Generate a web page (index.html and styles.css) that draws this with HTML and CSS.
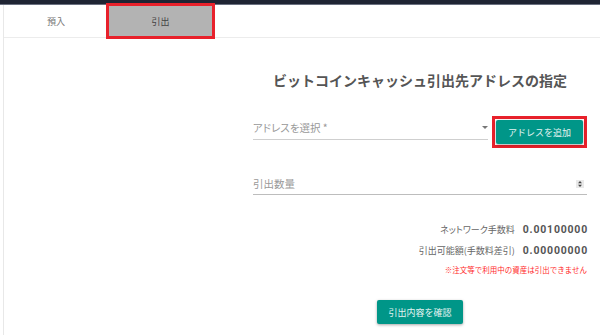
FILE: index.html
```html
<!DOCTYPE html>
<html lang="ja">
<head>
<meta charset="utf-8">
<title>引出</title>
<link rel="stylesheet" href="styles.css">
</head>
<body>
<div class="topbar"></div>
<div class="card">
  <div class="tabs">
    <div class="tab">預入</div>
    <div class="tab active">引出</div>
  </div>
  <div class="content">
    <h1 class="title">ビットコインキャッシュ引出先アドレスの指定</h1>
    <div class="select-row">
      <div class="field select">
        <span class="label palt">アドレスを選択 *</span>
        <span class="arrow"></span>
      </div>
      <div class="add-frame">
        <button class="btn add">アドレスを追加</button>
      </div>
    </div>
    <div class="field qty">
      <span class="label">引出数量</span>
      <svg class="spin" width="8" height="8" viewBox="0 0 8 8"><rect x="0" y="0" width="8" height="8" fill="#e9e9e9"/><path d="M4 1 L6 3.2 L2 3.2 Z M4 7 L6 4.8 L2 4.8 Z" fill="#444"/></svg>
    </div>
    <div class="fees">
      <div class="fee-row"><span class="fee-label palt">ネットワーク手数料</span><span class="fee-value">0.00100000</span></div>
      <div class="fee-row"><span class="fee-label">引出可能額(手数料差引)</span><span class="fee-value">0.00000000</span></div>
      <div class="note">※注文等で利用中の資産は引出できません</div>
    </div>
    <div class="confirm-wrap">
      <button class="btn confirm">引出内容を確認</button>
    </div>
  </div>
</div>
</body>
</html>
```
FILE: styles.css
```css
html, body {
  margin: 0;
  padding: 0;
  background: #ffffff;
  font-family: "Noto Sans CJK JP", "Noto Sans", sans-serif;
}
.topbar {
  height: 4px;
  background: #1f2433;
  border-bottom: 1px solid #6a7080;
}
.card {
  margin-left: 3px;
  border-left: 1px solid #e8e8e8;
  height: 330px;
}
.tabs {
  display: flex;
  height: 32px;
  border-bottom: 1px solid #ececec;
}
.tab {
  width: 104px;
  display: flex;
  align-items: center;
  justify-content: center;
  font-size: 9px;
  color: #777;
}
.tab.active {
  width: 105px;
  background: #b3b3b3;
  color: #444;
  outline: 3px solid #e8212b;
  outline-offset: -1px;
}
.content {
  margin-left: 249px;
  width: 334px;
  display: flex;
  flex-direction: column;
}
.title {
  margin: 32px 0 0;
  font-size: 14px;
  line-height: 20px;
  font-weight: bold;
  color: #555;
  text-align: center;
}
.palt {
  font-feature-settings: "palt";
}
.select-row {
  margin-top: 26px;
  display: flex;
  align-items: flex-start;
  gap: 4px;
}
.field {
  display: flex;
  align-items: center;
  justify-content: space-between;
  box-sizing: border-box;
}
.label {
  font-size: 10.5px;
  line-height: 16px;
  color: #999;
}
.select {
  margin-top: 4px;
  width: 237px;
  padding-bottom: 3px;
  border-bottom: 1px solid #cfcfcf;
}
.arrow {
  width: 0;
  height: 0;
  border-left: 3px solid transparent;
  border-right: 3px solid transparent;
  border-top: 3px solid #777;
  margin-top: -1px;
}
.add-frame {
  border: 3px solid #e8212b;
  padding: 1px;
  display: flex;
}
.btn {
  border: none;
  background: #009688;
  color: #e3f3f1;
  font-family: "Noto Sans CJK JP", "Noto Sans", sans-serif;
  font-size: 9px;
  height: 24px;
  width: 87px;
  padding: 0;
  border-radius: 2px;
  box-shadow: 0 1px 3px rgba(0, 0, 0, 0.35);
}
.qty {
  margin-top: 28px;
  width: 334px;
  padding-bottom: 2px;
  border-bottom: 1px solid #bdbdbd;
}
.spin {
  margin-right: 3px;
}
.fees {
  margin-top: 26px;
  display: flex;
  flex-direction: column;
  align-items: flex-end;
}
.fee-row {
  display: flex;
  align-items: center;
  gap: 8px;
  height: 16px;
  margin-bottom: 5px;
}
.fee-label {
  font-size: 9px;
  color: #666;
}
.fee-value {
  font-family: Roboto, "Liberation Sans", sans-serif;
  font-weight: bold;
  font-size: 10.5px;
  letter-spacing: 0.8px;
  color: #555;
  margin-right: -1px;
}
.note {
  font-size: 7.5px;
  line-height: 14px;
  color: #ff2a2a;
}
.confirm-wrap {
  margin-top: 23px;
  display: flex;
  justify-content: center;
}
.confirm {
  width: 86px;
}
```
